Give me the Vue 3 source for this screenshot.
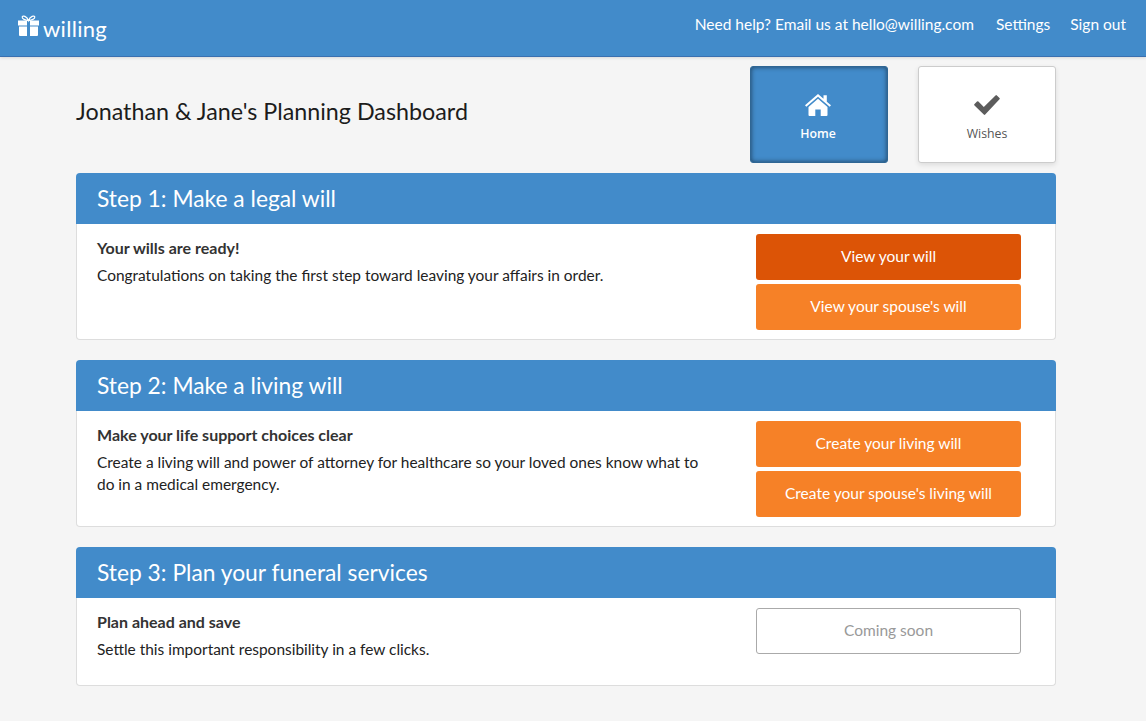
<script setup>
const steps = [
  { title: 'Step 1: Make a legal will', lead: 'Your wills are ready!', text: 'Congratulations on taking the first step toward leaving your affairs in order.',
    actions: [{ label: 'View your will', kind: 'dark' }, { label: "View your spouse's will", kind: 'orange' }] },
  { title: 'Step 2: Make a living will', lead: 'Make your life support choices clear', text: 'Create a living will and power of attorney for healthcare so your loved ones know what to do in a medical emergency.',
    actions: [{ label: 'Create your living will', kind: 'orange' }, { label: "Create your spouse's living will", kind: 'orange' }] },
  { title: 'Step 3: Plan your funeral services', lead: 'Plan ahead and save', text: 'Settle this important responsibility in a few clicks.',
    actions: [{ label: 'Coming soon', kind: 'ghost' }] },
]
</script>

<template>
  <div class="page">
    <header class="nav">
      <a class="brand">
        <svg class="gift" viewBox="0 0 21 21" width="21" height="21" aria-hidden="true">
          <path fill="none" stroke="#fff" stroke-width="1.2" d="M10.500 5.600C7.500 5.300 3.800 3.800 4.200 1.900c.4-1.500 4.700-1 6.300 3.700 1.600-4.700 5.900-5.200 6.300-3.700.4 1.900-3.300 3.400-6.300 3.700z"/>
          <path fill="#fff" d="M0 5.500h9v5H0zM12 5.500h9v5h-9zM1 11.500h8V21H2a1 1 0 0 1-1-1zM12 11.500h8V20a1 1 0 0 1-1 1h-7z"/>
        </svg>
        <span class="brand-name">willing</span>
      </a>
      <nav class="links">
        <a class="help">Need help? Email us at hello@willing.com</a>
        <a>Settings</a>
        <a>Sign out</a>
      </nav>
    </header>

    <main class="container">
      <section class="top">
        <h1>Jonathan &amp; Jane's Planning Dashboard</h1>
        <div class="tabs">
          <a class="tab active">
            <svg viewBox="0 0 26 22" width="26" height="22" aria-hidden="true">
              <path fill="#fff" d="M13 0 L18.500 4.800V1.200h3.300V7.700L26 11.300l-1.300 1.500L13 2.800 1.300 12.800 0 11.300z"/>
              <path fill="#fff" d="M13 4.800 22.500 12.900V21a1 1 0 0 1-1 1H15.700v-6.500h-5.400V22H4.500a1 1 0 0 1-1-1V12.900z"/>
            </svg>
            <span>Home</span>
          </a>
          <a class="tab">
            <svg viewBox="0 0 26 20" width="26" height="20" aria-hidden="true">
              <path fill="#5c5c5c" d="M9.800 19.600 0.500 10.400a1 1 0 0 1 0-1.400L3 6.500a1 1 0 0 1 1.400 0l5.400 5.400L21.500.4a1 1 0 0 1 1.400 0l2.600 2.500a1 1 0 0 1 0 1.400L11.200 19.600a1 1 0 0 1-1.400 0z"/>
            </svg>
            <span>Wishes</span>
          </a>
        </div>
      </section>

      <section v-for="s in steps" :key="s.title" class="panel">
        <h2 class="panel-head">{{ s.title }}</h2>
        <div class="panel-body">
          <div class="copy">
            <strong>{{ s.lead }}</strong>
            <p>{{ s.text }}</p>
          </div>
          <div class="actions">
            <a v-for="a in s.actions" :key="a.label" class="btn" :class="a.kind">{{ a.label }}</a>
          </div>
        </div>
      </section>
    </main>
  </div>
</template>

<style>
html, body { margin: 0; background: #f5f5f5; }
</style>

<style scoped>
.page {
  min-height: 721px;
  background: #f5f5f5;
  font-family: "Lato", "Open Sans", sans-serif;
  color: #222;
  box-sizing: border-box;
}
.nav {
  box-sizing: content-box;
  height: 48px;
  background: #428bca;
  border-bottom: 1px solid #3a70b0;
  box-shadow: 0 1px 3px rgba(0,0,0,.12);
  display: flex;
  align-items: center;
  justify-content: space-between;
  padding: 0 20px 8px 18px;
}
.brand { display: flex; align-items: center; gap: 4px; color: #fff; }
.gift { margin-top: 2px; }
.brand-name { font-size: 22px; letter-spacing: .3px; line-height: 1; margin-top: 9px; }
.links { display: flex; gap: 20px; color: #fff; font-size: 15.500px; }
.help { margin-right: 2px; }
.container { width: 980px; margin-left: 76px; padding-top: 9px; }
.top { display: flex; align-items: center; justify-content: space-between; margin-bottom: 10px; }
h1 { margin: 0 0 8px; font-size: 23.300px; font-weight: 400; color: #1c1c1c; }
.tabs { display: flex; gap: 30px; }
.tab {
  width: 138px; height: 97px; box-sizing: border-box;
  background: #fff; border: 1px solid #ccc; border-radius: 3px;
  box-shadow: 0 2px 5px rgba(0,0,0,.1);
  display: flex; flex-direction: column; align-items: center; justify-content: center; gap: 10px;
  padding-top: 8px;
  font-family: "Open Sans", sans-serif;
  font-size: 12.300px; color: #555;
}
.tab.active {
  background: #428bca; border-color: #2f6694; color: #fff; font-weight: 600;
  box-shadow: inset 0 0 5px rgba(0,0,0,.55);
  padding-top: 7px;
  padding-right: 2px;
  gap: 9px;
}
.panel { margin-bottom: 20px; }
.panel-head {
  margin: 0; height: 51px; line-height: 51px; padding-left: 21px;
  border-radius: 4px 4px 0 0;
  background: #428bca; color: #fff; font-size: 22.800px; font-weight: 400;
}
.panel-body {
  display: grid; grid-template-columns: 1fr 265px; column-gap: 50px;
  padding: 10px 34px 9px 20px;
  background: #fff; border: 1px solid #ddd; border-top: 0; border-radius: 0 0 4px 4px;
}
.copy { padding: 3px 0 16px; font-size: 15.450px; line-height: 22px; color: #222; }
.copy strong { display: block; font-size: 16px; font-weight: 700; color: #333; margin-bottom: 5px; }
.copy p { margin: 0; }
.actions { display: flex; flex-direction: column; gap: 4px; }
.btn {
  height: 46px; box-sizing: border-box; border-radius: 3px;
  display: flex; align-items: center; justify-content: center;
  padding-bottom: 2px;
  font-size: 15.500px; color: #fff;
}
.btn.dark { background: #dc5406; }
.btn.orange { background: #f68127; }
.btn.ghost { background: #fff; border: 1px solid #aaa; color: #999; }
</style>
